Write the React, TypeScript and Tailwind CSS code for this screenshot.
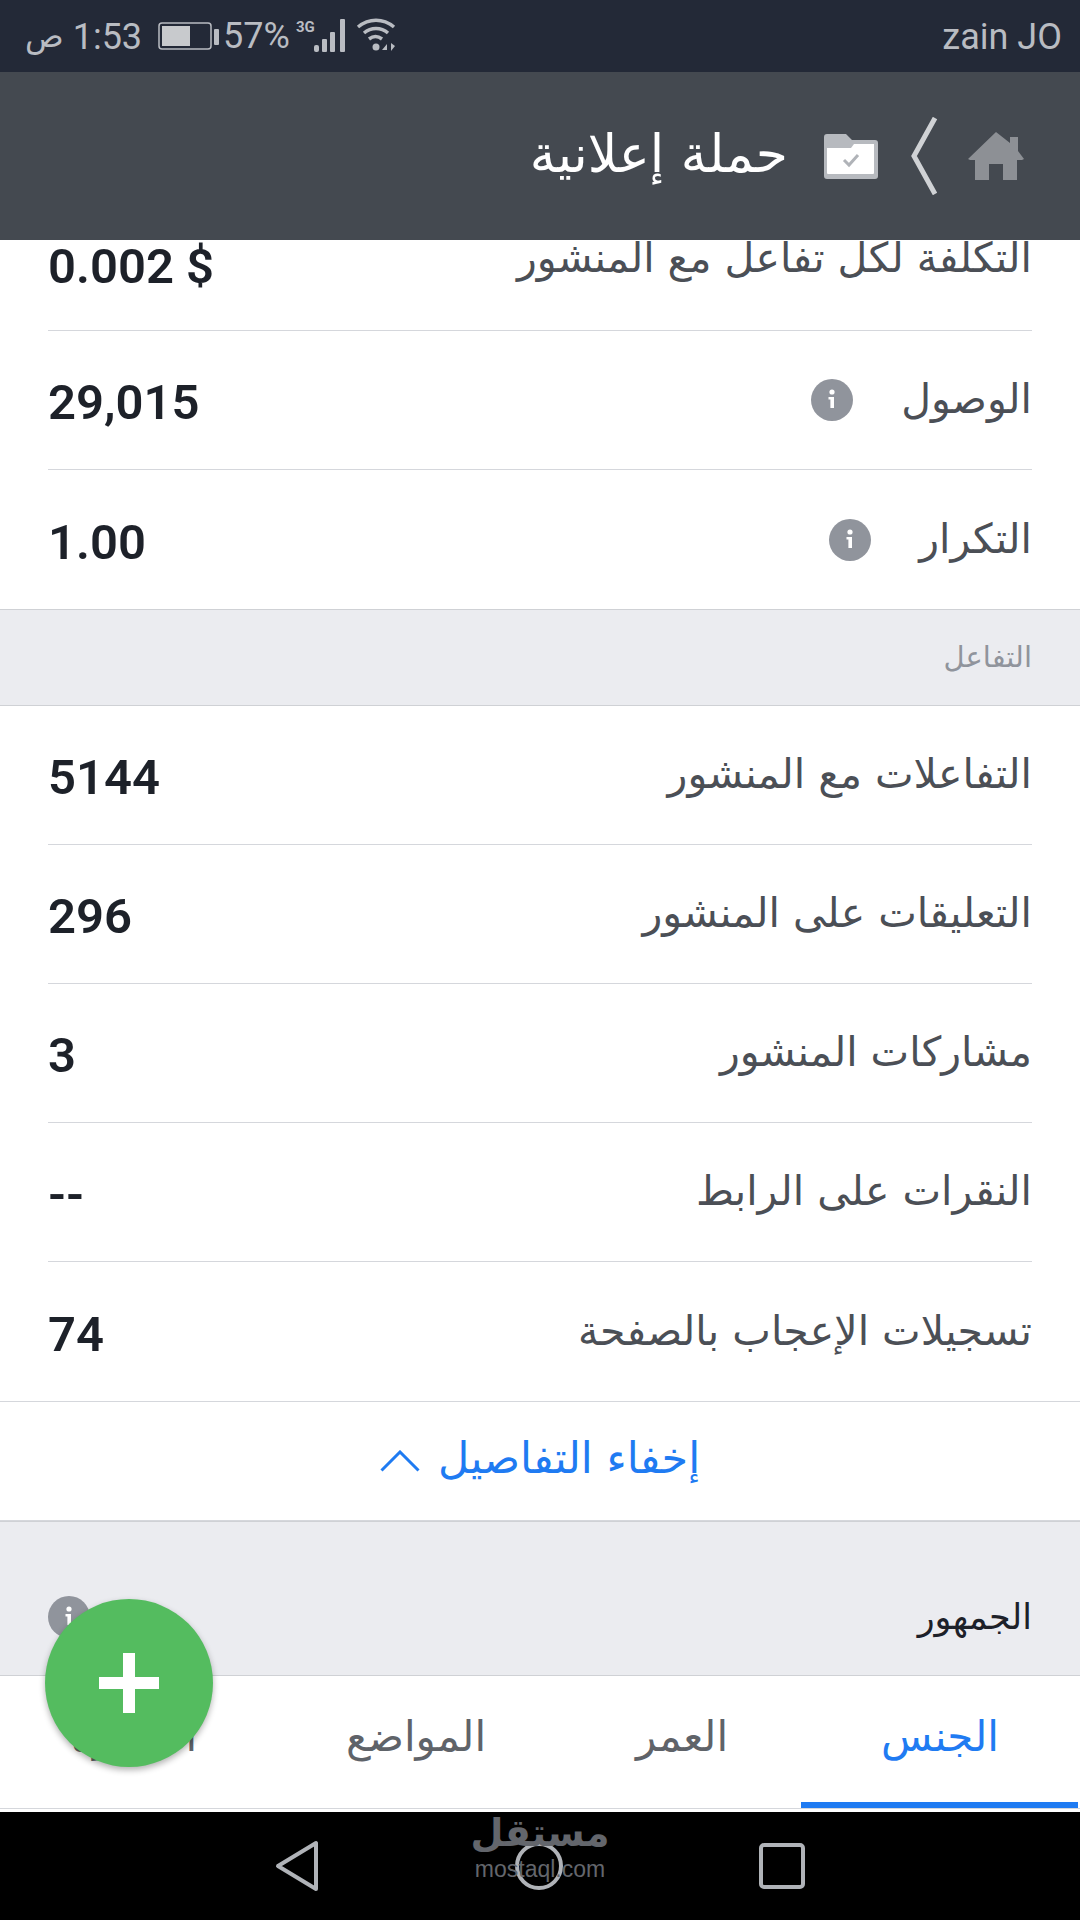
import React from 'react'

const arabic = "font-['DejaVu_Sans',sans-serif]"

function InfoIcon() {
  return (
    <svg width="42" height="42" viewBox="0 0 42 42" className="shrink-0">
      <circle cx="21" cy="21" r="21" fill="#90949c" />
      <circle cx="21" cy="13" r="2.6" fill="#fff" />
      <path d="M17.5 18h5.5v11h-3.6v-8.6h-1.9z" fill="#fff" />
    </svg>
  )
}

function Row({ label, value, info, last }: { label: string; value: string; info?: boolean; last?: boolean }) {
  return (
    <div className="px-[48px] bg-white">
      <div className={`h-[139px] flex flex-row-reverse items-center justify-between ${last ? '' : 'border-b border-[#d5d7dc]'}`}>
        <div className="flex items-center gap-[48px]" dir="rtl">
          <span className={`${arabic} text-[41px] text-[#4b4f56]`}>{label}</span>
          {info && <InfoIcon />}
        </div>
        <span className="font-['Roboto',sans-serif] font-semibold text-[49px] text-[#1d2129] pt-[6px]">{value}</span>
      </div>
    </div>
  )
}

function Tab({ label, width, active }: { label: string; width: string; active?: boolean }) {
  return (
    <div className={`relative ${width} flex items-center justify-center pb-[12px] ${arabic} text-[42px] ${active ? 'text-[#1f7bf2]' : 'text-[#5f6369]'}`}>
      {label}
      {active && <div className="absolute bottom-0 left-[1px] right-[2px] h-[6px] bg-[#1f7bf2]" />}
    </div>
  )
}

export default function App() {
  return (
    <div className="relative w-[1080px] h-[1920px] overflow-hidden bg-white">
      {/* status bar */}
      <div className="h-[72px] bg-[#232937] flex items-center justify-between pl-[25px] pr-[18px] text-[#b9bcc2] font-['Roboto',sans-serif] text-[36px]">
        <div className="flex items-center">
          <span className={`${arabic} text-[32px] mr-[9px]`}>ص</span>
          <span className="pt-[2px]">1:53</span>
          <svg width="62" height="30" viewBox="0 0 62 30" className="ml-[16px]">
            <rect x="1" y="2" width="52" height="26" rx="3" fill="none" stroke="#b9bcc2" strokeWidth="1.5" />
            <rect x="4" y="5" width="28" height="20" fill="#c8cacd" />
            <rect x="56" y="8" width="5" height="16" rx="1" fill="#b9bcc2" />
          </svg>
          <span className="ml-[3px]">57%</span>
          <svg width="52" height="36" viewBox="0 0 52 36" className="ml-[6px]">
            <text x="0" y="14" fontSize="15" fontWeight="700" fill="#b9bcc2" fontFamily="Roboto">3G</text>
            <rect x="18" y="27" width="5" height="7" rx="2" fill="#b9bcc2" />
            <rect x="26" y="21" width="5" height="13" rx="1" fill="#b9bcc2" />
            <rect x="34" y="14" width="5" height="20" rx="1" fill="#b9bcc2" />
            <rect x="44" y="1" width="5" height="33" rx="1" fill="#b9bcc2" />
          </svg>
          <svg width="40" height="36" viewBox="0 0 40 36" className="ml-[8px]">
            <path d="M2 9c11-9 25-9 36 0M8 15c7-6 17-6 24 0M13 21c4-3 9-3 13 0" fill="none" stroke="#b9bcc2" strokeWidth="3.5" />
            <circle cx="20" cy="29" r="3.5" fill="#b9bcc2" />
            <path d="M26 32l5-6v6zM35 25v8l4-5z" fill="#b9bcc2" />
          </svg>
        </div>
        <span className="pt-[2px]">zain JO</span>
      </div>

      {/* header */}
      <div className="h-[168px] bg-[#444950] flex items-center justify-end pr-[56px]" dir="ltr">
        <span className={`${arabic} text-[52px] text-white mr-[36px] -mt-[4px]`} dir="rtl">حملة إعلانية</span>
        <svg width="54" height="46" viewBox="0 0 54 46" className="mr-[32px]">
          <path d="M0 4a3 3 0 0 1 3-3h19l6 6h23a3 3 0 0 1 3 3v33a3 3 0 0 1-3 3H3a3 3 0 0 1-3-3z" fill="#b7babf" />
          <path d="M3 15h24l3-4h20v29a1 1 0 0 1-1 1H4a1 1 0 0 1-1-1z" fill="#fff" />
          <path d="M20 27l5 5 9-10" fill="none" stroke="#b0b3b8" strokeWidth="3" />
        </svg>
        <svg width="28" height="78" viewBox="0 0 28 78" className="mr-[30px]">
          <path d="M25 1L4 39l21 38" fill="none" stroke="#d0d2d5" strokeWidth="5" />
        </svg>
        <svg width="56" height="48" viewBox="0 0 56 48">
          <path d="M28 0L42 11V5h8v14l6 8-2 1H49v20H35V32H21v16H7V28H2l-2-1z" fill="#8d9095" />
        </svg>
      </div>

      {/* scrolled content, first row is cut by the header */}
      <div className="px-[48px]">
        <div className="h-[91px] flex flex-row-reverse items-start justify-between border-b border-[#d5d7dc] overflow-hidden">
          <div className={`${arabic} text-[41px] text-[#4b4f56] -mt-[12px]`} dir="rtl">التكلفة لكل تفاعل مع المنشور</div>
          <span className="font-['Roboto',sans-serif] font-semibold text-[49px] leading-none text-[#1d2129] mt-[2px]">0.002 $</span>
        </div>
      </div>
      <Row label="الوصول" value="29,015" info />
      <Row label="التكرار" value="1.00" info last />

      <div className="h-[97px] bg-[#ebecf0] border-y border-[#cfd1d5] flex items-center justify-end pr-[48px]">
        <span className={`${arabic} text-[29px] text-[#90949c]`} dir="rtl">التفاعل</span>
      </div>

      <Row label="التفاعلات مع المنشور" value="5144" />
      <Row label="التعليقات على المنشور" value="296" />
      <Row label="مشاركات المنشور" value="3" />
      <Row label="النقرات على الرابط" value="--" />
      <Row label="تسجيلات الإعجاب بالصفحة" value="74" last />

      <div className="h-[120px] border-y border-[#d5d7dc] flex items-center justify-center gap-[18px] text-[#1f7bf2]">
        <svg width="40" height="22" viewBox="0 0 40 22">
          <path d="M1.5 20.5L20 2l18.5 18.5" fill="none" stroke="#1f7bf2" strokeWidth="3" />
        </svg>
        <span className={`${arabic} text-[43px] -mt-[6px]`} dir="rtl">إخفاء التفاصيل</span>
      </div>

      <div className="h-[155px] bg-[#ebecf0] border-y border-[#cfd1d5] flex items-center justify-between pl-[48px] pr-[48px] pt-[74px] pb-[37px]">
        <InfoIcon />
        <span className={`${arabic} text-[35px] text-[#1d2129]`} dir="rtl">الجمهور</span>
      </div>

      <div className="h-[133px] flex flex-row-reverse border-b border-[#d5d7dc]">
        <Tab label="الجنس" width="w-[280px]" active />
        <Tab label="العمر" width="w-[236px]" />
        <Tab label="المواضع" width="w-[296px]" />
        <Tab label="الأجهزة" width="w-[268px]" />
      </div>

      {/* nav bar */}
      <div className="absolute left-0 right-0 bottom-0 h-[108px] bg-black flex items-center justify-center gap-[196px]">
        <svg width="44" height="52" viewBox="0 0 44 52">
          <path d="M41 3v46L3 26z" fill="none" stroke="#b0b3b8" strokeWidth="4" strokeLinejoin="round" />
        </svg>
        <svg width="48" height="48" viewBox="0 0 48 48">
          <circle cx="24" cy="24" r="22" fill="none" stroke="#b0b3b8" strokeWidth="4" />
        </svg>
        <svg width="46" height="46" viewBox="0 0 46 46">
          <rect x="2" y="2" width="42" height="42" rx="3" fill="none" stroke="#b0b3b8" strokeWidth="4" />
        </svg>
        <div className="absolute left-[472px] top-[2px] w-[136px] flex flex-col items-center text-[#63666c] leading-none">
          <span className={`${arabic} font-bold text-[38px]`} dir="rtl">مستقل</span>
          <span className="font-['Liberation_Sans',sans-serif] text-[23px] mt-[6px]">mostaql.com</span>
        </div>
      </div>

      {/* floating add button */}
      <div className="absolute left-[45px] top-[1599px] w-[168px] h-[168px] rounded-full bg-[#54bc5f] shadow-[0_3px_6px_rgba(0,0,0,0.3)] flex items-center justify-center">
        <svg width="60" height="60" viewBox="0 0 60 60">
          <path d="M24 0h12v24h24v12H36v24H24V36H0V24h24z" fill="#fff" />
        </svg>
      </div>
    </div>
  )
}
